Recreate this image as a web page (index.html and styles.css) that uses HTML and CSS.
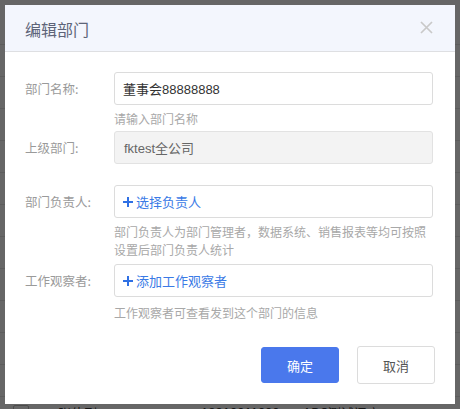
FILE: index.html
```html
<!DOCTYPE html>
<html lang="zh-CN">
<head>
<meta charset="utf-8">
<title>编辑部门</title>
<link rel="stylesheet" href="styles.css">
</head>
<body>
<div class="page">
  <div class="table">
    <div class="trow"></div>
    <div class="trow"></div>
    <div class="trow"></div>
    <div class="trow"></div>
    <div class="trow"></div>
    <div class="trow"></div>
    <div class="trow"></div>
    <div class="trow"></div>
    <div class="trow"></div>
    <div class="trow"></div>
    <div class="trow"></div>
    <div class="trow"></div>
    <div class="trow"><span class="chk"></span><span class="c-name">张伟刚</span><span class="c-dot"></span><span class="c-phone">18910011000</span><span class="c-dept">ABC测试门店 ...</span></div>
  </div>
</div>
<div class="mask"></div>
<div class="modal">
  <div class="modal-header">
    <div class="modal-title">编辑部门</div>
    <svg class="close" width="13" height="13" viewBox="0 0 13 13"><path d="M1 1L12 12M12 1L1 12" stroke="#c9c9c9" stroke-width="1.7" fill="none"/></svg>
  </div>
  <div class="modal-body">
    <div class="row gap-sm">
      <div class="label">部门名称:</div>
      <div class="field">
        <div class="input">董事会88888888</div>
        <div class="hint">请输入部门名称</div>
      </div>
    </div>
    <div class="row">
      <div class="label">上级部门:</div>
      <div class="field">
        <div class="input disabled">fktest全公司</div>
      </div>
    </div>
    <div class="row gap-md">
      <div class="label">部门负责人:</div>
      <div class="field">
        <div class="input picker"><svg class="plus" width="10" height="10" viewBox="0 0 10 10"><path d="M5 0V10M0 5H10" stroke="#2f70e4" stroke-width="2"/></svg><span>选择负责人</span></div>
        <div class="hint">部门负责人为部门管理者，数据系统、销售报表等均可按照设置后部门负责人统计</div>
      </div>
    </div>
    <div class="row gap-md">
      <div class="label">工作观察者:</div>
      <div class="field">
        <div class="input picker"><svg class="plus" width="10" height="10" viewBox="0 0 10 10"><path d="M5 0V10M0 5H10" stroke="#2f70e4" stroke-width="2"/></svg><span>添加工作观察者</span></div>
        <div class="hint hint-low">工作观察者可查看发到这个部门的信息</div>
      </div>
    </div>
  </div>
  <div class="modal-footer">
    <button class="btn btn-primary">确定</button>
    <button class="btn btn-default">取消</button>
  </div>
</div>
</body>
</html>
```
FILE: styles.css
```css
html, body {
  margin: 0;
  padding: 0;
}
body {
  width: 460px;
  height: 409px;
  overflow: hidden;
  font-family: "Liberation Sans", "Noto Sans CJK SC", sans-serif;
  background: #ffffff;
}
.page {
  padding-top: 13px;
}
.table {
  display: flex;
  flex-direction: column;
}
.trow {
  display: flex;
  align-items: center;
  height: 31px;
  border-bottom: 1px solid #e6e6e6;
  font-size: 13px;
  color: #333;
  font-family: "Noto Sans CJK SC", sans-serif;
}
.chk {
  width: 14px;
  height: 14px;
  border: 1px solid #bbb;
  border-radius: 2px;
  margin-left: 13px;
}
.c-name {
  margin-left: 29px;
  width: 124px;
}
.c-dot {
  width: 8px;
  height: 8px;
  border-radius: 50%;
  background: #49b637;
}
.c-phone {
  margin-left: 11px;
  width: 102px;
  font-family: "Liberation Sans", sans-serif;
}
.mask {
  position: fixed;
  inset: 0;
  background: rgba(0, 0, 0, 0.6);
}
.modal {
  position: absolute;
  left: 5px;
  top: 5px;
  width: 450px;
  height: 399px;
  background: #fff;
  display: flex;
  flex-direction: column;
}
.modal-header {
  height: 46px;
  background: #f3f6fd;
  border-bottom: 1px solid #dedfe2;
  display: flex;
  align-items: center;
  justify-content: space-between;
  padding: 0 20px;
}
.modal-title {
  font-size: 16px;
  color: #5d6478;
  font-family: "Noto Sans CJK SC", sans-serif;
  margin-top: 2px;
}
.close {
  margin-right: 2px;
  margin-top: -2px;
}
.modal-body {
  padding: 20px 22px 0 20px;
}
.row {
  display: flex;
  margin-bottom: 21px;
}
.row.gap-sm {
  margin-bottom: 3px;
}
.row.gap-md {
  margin-bottom: 5px;
}
.label {
  width: 89px;
  flex: none;
  line-height: 33px;
  font-size: 12.5px;
  color: #9a9a9a;
  font-family: "Noto Sans CJK SC", sans-serif;
}
.field {
  flex: 1;
  min-width: 0;
}
.input {
  border: 1px solid #dcdcdc;
  border-radius: 3px;
  box-sizing: border-box;
  height: 33px;
  display: flex;
  align-items: center;
  padding: 0 8px;
  font-size: 13px;
  color: #333;
}
.input.disabled {
  background: #f3f3f3;
  border-color: #e2e2e2;
  color: #666;
  padding-left: 9px;
}
.input.picker {
  color: #3a7ae6;
  padding-left: 8px;
  font-family: "Noto Sans CJK SC", sans-serif;
}
.plus {
  margin-right: 3px;
}
.hint {
  margin-top: 5px;
  font-size: 12px;
  line-height: 18px;
  color: #a8a8a8;
  font-family: "Noto Sans CJK SC", sans-serif;
}
.hint.hint-low {
  margin-top: 7px;
}
.modal-footer {
  margin-top: auto;
  padding: 0 20px 20px 0;
  display: flex;
  justify-content: flex-end;
  gap: 18px;
}
.btn {
  width: 78px;
  border-radius: 3px;
  font-size: 13px;
  font-family: "Noto Sans CJK SC", sans-serif;
  box-sizing: border-box;
  cursor: pointer;
  padding: 0;
}
.btn-primary {
  background: #4a78ec;
  border: 1px solid #4a78ec;
  color: #fff;
  height: 36px;
  margin-top: 1px;
}
.btn-default {
  background: #fff;
  border: 1px solid #dcdcdc;
  color: #555;
  height: 38px;
}
```
